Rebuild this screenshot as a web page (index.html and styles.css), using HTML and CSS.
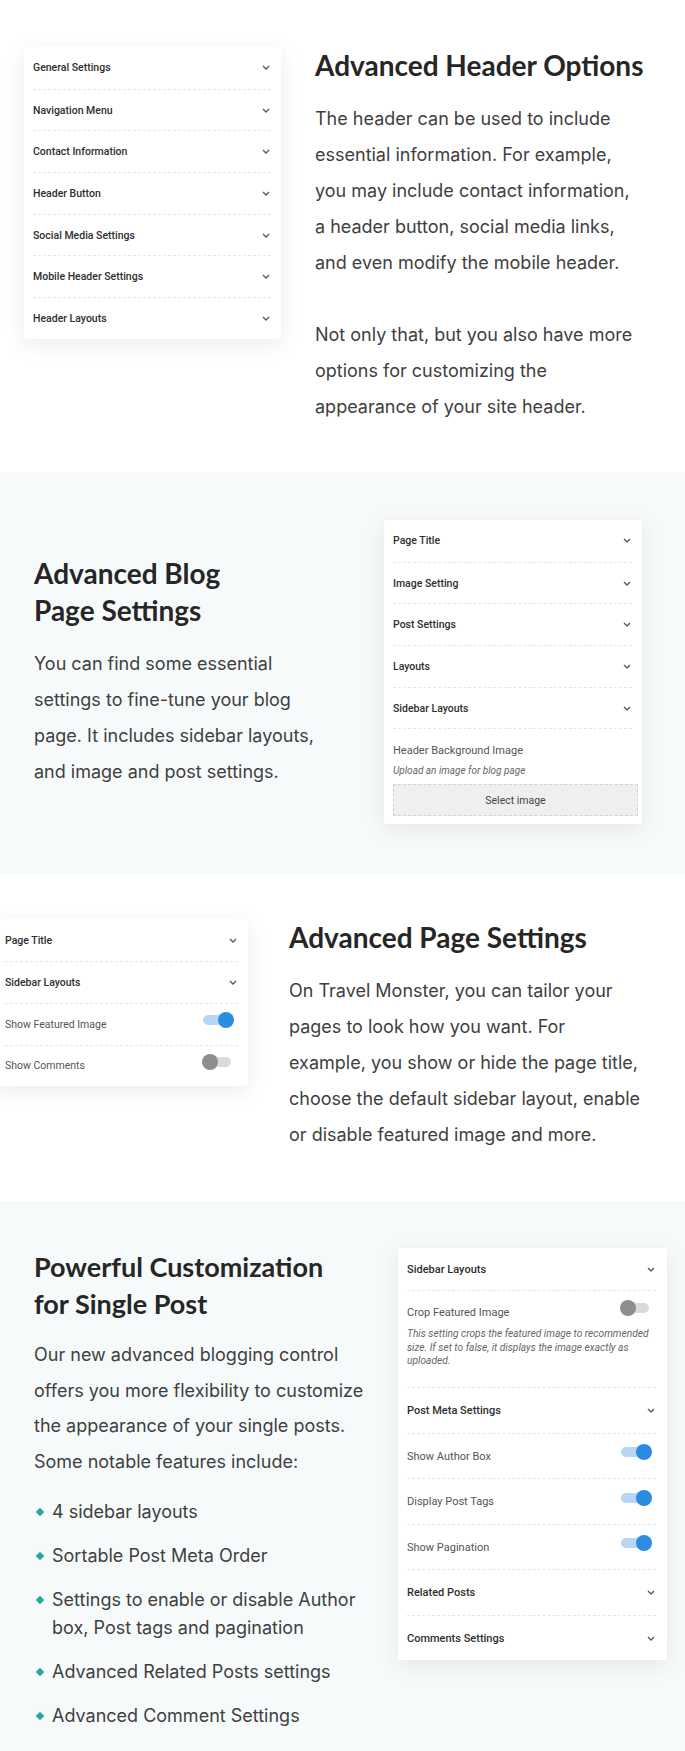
FILE: index.html
```html
<!DOCTYPE html>
<html lang="en">
<head>
    <meta charset="UTF-8">
    <meta name="viewport" content="width=device-width, initial-scale=1.0">
    <title>Travel Monster - Customizer Features</title>
    <link rel="stylesheet" href="styles.css">
</head>
<body>
    <!-- Header options -->
    <section class="feature feature--header">
        <div class="panel panel--header">
            <div class="panel__row"><span class="panel__label">General Settings</span><svg class="chevron" viewBox="0 0 8 5"><path d="M1 1l3 3 3-3"/></svg></div>
            <div class="panel__row"><span class="panel__label">Navigation Menu</span><svg class="chevron" viewBox="0 0 8 5"><path d="M1 1l3 3 3-3"/></svg></div>
            <div class="panel__row"><span class="panel__label">Contact Information</span><svg class="chevron" viewBox="0 0 8 5"><path d="M1 1l3 3 3-3"/></svg></div>
            <div class="panel__row"><span class="panel__label">Header Button</span><svg class="chevron" viewBox="0 0 8 5"><path d="M1 1l3 3 3-3"/></svg></div>
            <div class="panel__row"><span class="panel__label">Social Media Settings</span><svg class="chevron" viewBox="0 0 8 5"><path d="M1 1l3 3 3-3"/></svg></div>
            <div class="panel__row"><span class="panel__label">Mobile Header Settings</span><svg class="chevron" viewBox="0 0 8 5"><path d="M1 1l3 3 3-3"/></svg></div>
            <div class="panel__row"><span class="panel__label">Header Layouts</span><svg class="chevron" viewBox="0 0 8 5"><path d="M1 1l3 3 3-3"/></svg></div>
        </div>
        <div class="feature__text">
            <h2 class="feature__title">Advanced Header Options</h2>
            <p>The header can be used to include essential information. For example, you may include contact information, a header button, social media links, and even modify the mobile header.</p>
            <p>Not only that, but you also have more options for customizing the appearance of your site header.</p>
        </div>
    </section>

    <!-- Blog page settings -->
    <section class="feature feature--alt feature--blog">
        <div class="feature__text">
            <h2 class="feature__title">Advanced Blog<br>Page Settings</h2>
            <p>You can find some essential settings to fine-tune your blog page. It includes sidebar layouts, and image and post settings.</p>
        </div>
        <div class="panel panel--blog">
            <div class="panel__row"><span class="panel__label">Page Title</span><svg class="chevron" viewBox="0 0 8 5"><path d="M1 1l3 3 3-3"/></svg></div>
            <div class="panel__row"><span class="panel__label">Image Setting</span><svg class="chevron" viewBox="0 0 8 5"><path d="M1 1l3 3 3-3"/></svg></div>
            <div class="panel__row"><span class="panel__label">Post Settings</span><svg class="chevron" viewBox="0 0 8 5"><path d="M1 1l3 3 3-3"/></svg></div>
            <div class="panel__row"><span class="panel__label">Layouts</span><svg class="chevron" viewBox="0 0 8 5"><path d="M1 1l3 3 3-3"/></svg></div>
            <div class="panel__row"><span class="panel__label">Sidebar Layouts</span><svg class="chevron" viewBox="0 0 8 5"><path d="M1 1l3 3 3-3"/></svg></div>
            <div class="panel__upload">
                <div class="panel__label panel__label--plain">Header Background Image</div>
                <div class="panel__hint">Upload an image for blog page</div>
                <button class="panel__button" type="button">Select image</button>
            </div>
        </div>
    </section>

    <!-- Page settings -->
    <section class="feature feature--page">
        <div class="panel panel--page">
            <div class="panel__row"><span class="panel__label">Page Title</span><svg class="chevron" viewBox="0 0 8 5"><path d="M1 1l3 3 3-3"/></svg></div>
            <div class="panel__row"><span class="panel__label">Sidebar Layouts</span><svg class="chevron" viewBox="0 0 8 5"><path d="M1 1l3 3 3-3"/></svg></div>
            <div class="panel__row"><span class="panel__label panel__label--plain">Show Featured Image</span><span class="toggle toggle--on"></span></div>
            <div class="panel__row"><span class="panel__label panel__label--plain">Show Comments</span><span class="toggle"></span></div>
        </div>
        <div class="feature__text">
            <h2 class="feature__title">Advanced Page Settings</h2>
            <p>On Travel Monster, you can tailor your pages to look how you want. For example, you show or hide the page title, choose the default sidebar layout, enable or disable featured image and more.</p>
        </div>
    </section>

    <!-- Single post -->
    <section class="feature feature--alt feature--single">
        <div class="feature__text">
            <h2 class="feature__title">Powerful Customization<br>for Single Post</h2>
            <p>Our new advanced blogging control offers you more flexibility to customize the appearance of your single posts. Some notable features include:</p>
            <ul class="feature__list">
                <li>4 sidebar layouts</li>
                <li>Sortable Post Meta Order</li>
                <li>Settings to enable or disable Author box, Post tags and pagination</li>
                <li>Advanced Related Posts settings</li>
                <li>Advanced Comment Settings</li>
            </ul>
        </div>
        <div class="panel panel--single">
            <div class="panel__row"><span class="panel__label">Sidebar Layouts</span><svg class="chevron" viewBox="0 0 8 5"><path d="M1 1l3 3 3-3"/></svg></div>
            <div class="panel__setting">
                <div class="panel__setting-head"><span class="panel__label panel__label--plain">Crop Featured Image</span><span class="toggle"></span></div>
                <p class="panel__desc">This setting crops the featured image to recommended size. If set to false, it displays the image exactly as uploaded.</p>
            </div>
            <div class="panel__row"><span class="panel__label">Post Meta Settings</span><svg class="chevron" viewBox="0 0 8 5"><path d="M1 1l3 3 3-3"/></svg></div>
            <div class="panel__row"><span class="panel__label panel__label--plain">Show Author Box</span><span class="toggle toggle--on"></span></div>
            <div class="panel__row"><span class="panel__label panel__label--plain">Display Post Tags</span><span class="toggle toggle--on"></span></div>
            <div class="panel__row"><span class="panel__label panel__label--plain">Show Pagination</span><span class="toggle toggle--on"></span></div>
            <div class="panel__row"><span class="panel__label">Related Posts</span><svg class="chevron" viewBox="0 0 8 5"><path d="M1 1l3 3 3-3"/></svg></div>
            <div class="panel__row"><span class="panel__label">Comments Settings</span><svg class="chevron" viewBox="0 0 8 5"><path d="M1 1l3 3 3-3"/></svg></div>
        </div>
    </section>
</body>
</html>
```

FILE: styles.css
```css
/* General */
body {
    margin: 0;
    font-family: Inter, "Liberation Sans", sans-serif;
    color: #404040;
    background: #fff;
    overflow-x: hidden;
}

/* Feature sections */
.feature {
    display: flex;
    align-items: flex-start;
}

.feature--alt {
    background: #f7fafb;
}

.feature--header {
    padding: 47px 20px 47px 24px;
    gap: 34px;
}

.feature--blog {
    padding: 48px 43px 49px 34px;
    align-items: center;
    justify-content: space-between;
}

.feature--page {
    padding: 46px 0 48px 0;
    gap: 41px;
}

.feature--single {
    padding: 47px 18px 47px 34px;
    justify-content: space-between;
}

.feature--header .feature__text { width: 322px; }
.feature--blog .feature__text { width: 292px; }
.feature--page .feature__text { width: 352px; }
.feature--single .feature__text { width: 340px; }

.feature__title {
    font-family: Lato, "Liberation Sans", sans-serif;
    font-weight: 700;
    font-size: 28px;
    line-height: 37px;
    color: #262626;
    margin: 0 0 17px;
}

.feature--header .feature__title {
    white-space: nowrap;
}

.feature__text p {
    font-size: 18px;
    line-height: 36px;
    margin: 0 0 36px;
}

.feature__text p:last-child {
    margin-bottom: 0;
}

.feature--single .feature__title {
    font-size: 27px;
    margin-bottom: 15px;
}

.feature--single .feature__text p {
    line-height: 35.5px;
    margin-bottom: 19px;
}

/* Bullet list */
.feature__list {
    list-style: none;
    padding: 0;
    margin: 0;
}

.feature__list li {
    position: relative;
    padding-left: 18px;
    font-size: 18px;
    line-height: 27.5px;
    margin-bottom: 16.5px;
}

.feature__list li::before {
    content: '';
    position: absolute;
    left: 3px;
    top: 11px;
    width: 6px;
    height: 6px;
    background: #26a89a;
    transform: rotate(45deg);
}

/* Customizer panels */
.panel {
    flex-shrink: 0;
    background: #fff;
    border-radius: 2px;
    box-shadow: 0 5px 22px rgba(0, 0, 0, 0.08);
    padding: 0 10px 0 9px;
    box-sizing: border-box;
    font-family: Roboto, "Liberation Sans", sans-serif;
}

.panel--header { width: 257px; }
.panel--blog { width: 258px; padding-bottom: 8px; }
.panel--page { width: 252px; margin-left: -4px; }
.panel--single { width: 269px; padding-right: 11px; }

.panel__row {
    display: flex;
    align-items: center;
    justify-content: space-between;
    height: 41.7px;
    box-sizing: border-box;
    border-top: 1px dashed #e6e6e6;
}

.panel__row:first-child {
    border-top: none;
}

.panel--single .panel__row {
    height: 45.5px;
}

.panel--single .panel__row:first-child {
    height: 42px;
}

.panel__label {
    font-size: 10.5px;
    font-weight: 500;
    color: #2e2e2e;
}

.panel--single .panel__label {
    font-size: 11px;
}

.panel__label--plain {
    font-weight: 400;
    color: #555;
}

.chevron {
    width: 8px;
    height: 5px;
    margin-right: 1px;
    fill: none;
    stroke: #555;
    stroke-width: 1.3;
}

/* Toggle switch */
.toggle {
    position: relative;
    width: 28px;
    height: 10px;
    border-radius: 5px;
    background: #dadada;
    margin: 0 7px 8px 0;
}

.toggle::after {
    content: '';
    position: absolute;
    top: 50%;
    left: -1px;
    width: 16px;
    height: 16px;
    margin-top: -8px;
    border-radius: 50%;
    background: #8e8e8e;
}

.toggle--on {
    background: #b6d6f3;
}

.toggle--on::after {
    left: auto;
    right: -3px;
    background: #2b8ce0;
}

/* Setting with description */
.panel__setting {
    border-top: 1px dashed #e6e6e6;
    padding: 14px 0 19.5px;
}

.panel__setting-head {
    display: flex;
    align-items: center;
    justify-content: space-between;
    height: 16px;
    line-height: 16px;
}

.panel__setting-head .toggle {
    margin-bottom: 10px;
}

.panel__desc {
    margin: 6px 0 0;
    font-size: 10.2px;
    line-height: 13.5px;
    font-style: italic;
    color: #666;
}

/* Image upload */
.panel__upload {
    border-top: 1px dashed #e6e6e6;
    padding-top: 14px;
}

.panel__upload .panel__label {
    display: block;
    font-size: 11px;
    line-height: 16px;
}

.panel__hint {
    margin-top: 5px;
    font-size: 10px;
    line-height: 14px;
    font-style: italic;
    color: #666;
}

.panel__button {
    display: block;
    width: calc(100% + 6px);
    height: 32px;
    margin-top: 6px;
    background: #efeff0;
    border: 1px dashed #d4d4d4;
    font-family: inherit;
    font-size: 10.5px;
    color: #444;
}
```
